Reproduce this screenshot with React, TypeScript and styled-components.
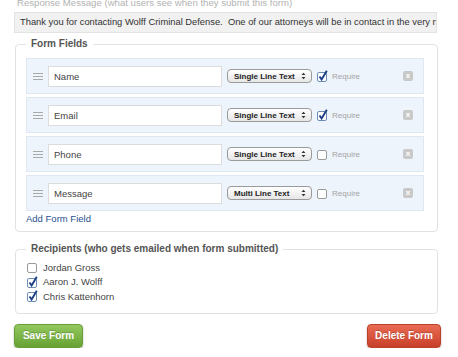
import React, { useState } from "react";
import styled, { createGlobalStyle } from "styled-components";

const GlobalStyle = createGlobalStyle`
    html, body {
        margin: 0;
        padding: 0;
        background: #ffffff;
        overflow: hidden;
    }
    body {
        font-family: "Liberation Sans", Arial, Helvetica, sans-serif;
        color: #333;
    }
`;

const SPage = styled.div`
    display: flex;
    flex-direction: column;
    width: 427px;
    padding-left: 14px;
`;

const SLabel = styled.div`
    font-size: 9.6px;
    line-height: 14px;
    color: #b3b3b3;
    margin-top: -4px;
    padding-left: 3px;
    white-space: nowrap;
`;

const SResponse = styled.div`
    box-sizing: border-box;
    width: 423px;
    height: 21px;
    margin-top: 2px;
    padding: 0 5px;
    background: #f1f1f1;
    border: 1px solid #e3e3e3;
    font-size: 9.35px;
    line-height: 19px;
    color: #333;
    white-space: nowrap;
    overflow: hidden;
`;

const SFieldset = styled.fieldset<{ $top: number; $pt: number; $bottom: number }>`
    box-sizing: border-box;
    width: 423px;
    margin: ${(p) => p.$top}px 0 0 1px;
    padding: ${(p) => p.$pt}px 13px ${(p) => p.$bottom}px 10px;
    border: 1px solid #e2e2e2;
    border-radius: 4px;
    min-width: 0;
`;

const SLegend = styled.legend`
    padding: 0 5px;
    margin-left: 0;
    font-size: 10px;
    font-weight: bold;
    color: #555;
    line-height: 14px;
`;

const SRows = styled.div`
    display: flex;
    flex-direction: column;
    gap: 3px;
`;

const SRow = styled.div`
    box-sizing: border-box;
    display: flex;
    align-items: center;
    height: 36px;
    padding: 0 10px 0 6px;
    background: #eef4fc;
    border: 1px solid #dfe7f1;
`;

const SHandle = styled.div`
    display: flex;
    flex-direction: column;
    gap: 2px;
    width: 10px;
    margin-right: 5px;

    span {
        display: block;
        height: 1px;
        background: #a9a9a9;
    }
`;

const SInput = styled.div`
    box-sizing: border-box;
    width: 174px;
    height: 21px;
    padding: 0 5px;
    background: #fff;
    border: 1px solid #dcdcdc;
    font-size: 9.5px;
    line-height: 19px;
    color: #444;
`;

const SSelect = styled.div`
    box-sizing: border-box;
    display: flex;
    align-items: center;
    justify-content: space-between;
    width: 85px;
    height: 14px;
    margin-left: 5px;
    padding: 0 5px 0 6px;
    border: 1px solid #9a9a9a;
    border-radius: 4px;
    background: linear-gradient(#ffffff, #e6e6e6);
    font-size: 8px;
    font-weight: bold;
    color: #222;
    white-space: nowrap;
`;

const SRequire = styled.label`
    display: flex;
    align-items: center;
    gap: 4px;
    margin-left: 5px;
    font-size: 8px;
    color: #a3a3a3;
`;

const SRemove = styled.div`
    display: flex;
    align-items: center;
    justify-content: center;
    width: 10px;
    height: 10px;
    margin-left: auto;
    border-radius: 2px;
    background: #c9c9c9;
    color: #fff;
    font-size: 8px;
    line-height: 10px;
    font-weight: bold;
`;

const SAddLink = styled.a`
    display: block;
    margin-top: 1px;
    font-size: 9.5px;
    line-height: 14px;
    color: #1f4f8e;
    text-decoration: none;
`;

const SRecipient = styled.label`
    display: flex;
    align-items: center;
    gap: 5px;
    height: 14.5px;
    padding-left: 1px;
    font-size: 9.5px;
    color: #444;
`;

const SButtons = styled.div`
    display: flex;
    justify-content: space-between;
    margin-top: 10px;
`;

const SButton = styled.button<{ $tone: "green" | "red"; $width: number }>`
    width: ${(p) => p.$width}px;
    height: 24px;
    border: 1px solid ${(p) => (p.$tone === "green" ? "#6a9e3b" : "#b8412b")};
    border-radius: 4px;
    background: ${(p) =>
        p.$tone === "green" ? "linear-gradient(#93c95f, #66a132)" : "linear-gradient(#ea6b53, #c73f29)"};
    box-shadow: 0 1px 2px rgba(0, 0, 0, 0.3);
    color: #fff;
    font-family: "Liberation Sans", Arial, sans-serif;
    font-size: 10px;
    font-weight: bold;
    text-shadow: 0 -1px 0 rgba(0, 0, 0, 0.2);
    padding: 0;
`;

const CheckBox = ({ checked, onClick }: { checked: boolean; onClick?: () => void }) => (
    <svg width="11" height="12" viewBox="0 0 11 12" onClick={onClick} style={{ flexShrink: 0 }}>
        <rect x="0.5" y="2.5" width="9" height="9" rx="1.5" fill="#fff" stroke={checked ? "#6d8cb6" : "#9a9a9a"} />
        {checked && <path d="M2.5 6.5 L4.6 9.5 L9.8 0.8" fill="none" stroke="#1c3f86" strokeWidth="1.9" />}
    </svg>
);

const SelectArrows = () => (
    <svg width="5" height="8" viewBox="0 0 5 8">
        <path d="M0.5 3 L2.5 0.8 L4.5 3 Z M0.5 5 L2.5 7.2 L4.5 5 Z" fill="#333" />
    </svg>
);

const App = () => {
    const [fields, setFields] = useState([
        { name: "Name", type: "Single Line Text", required: true },
        { name: "Email", type: "Single Line Text", required: true },
        { name: "Phone", type: "Single Line Text", required: false },
        { name: "Message", type: "Multi Line Text", required: false },
    ]);
    const [recipients, setRecipients] = useState([
        { name: "Jordan Gross", checked: false },
        { name: "Aaron J. Wolff", checked: true },
        { name: "Chris Kattenhorn", checked: true },
    ]);

    const toggleRequire = (i: number) => () => {
        setFields(fields.map((f, idx) => (idx === i ? { ...f, required: !f.required } : f)));
    };

    const toggleRecipient = (i: number) => () => {
        setRecipients(recipients.map((r, idx) => (idx === i ? { ...r, checked: !r.checked } : r)));
    };

    return (
        <SPage>
            <GlobalStyle />
            <SLabel>Response Message (what users see when they submit this form)</SLabel>
            <SResponse>
                Thank you for contacting Wolff Criminal Defense.&nbsp; One of our attorneys will be in contact in the very
                near future.
            </SResponse>

            <SFieldset $top={4} $pt={7} $bottom={5}>
                <SLegend>Form Fields</SLegend>
                <SRows>
                    {fields.map((f, i) => (
                        <SRow key={f.name}>
                            <SHandle>
                                <span />
                                <span />
                                <span />
                            </SHandle>
                            <SInput>{f.name}</SInput>
                            <SSelect>
                                <span>{f.type}</span>
                                <SelectArrows />
                            </SSelect>
                            <SRequire>
                                <CheckBox checked={f.required} onClick={toggleRequire(i)} />
                                Require
                            </SRequire>
                            <SRemove>x</SRemove>
                        </SRow>
                    ))}
                </SRows>
                <SAddLink href="#">Add Form Field</SAddLink>
            </SFieldset>

            <SFieldset $top={10} $pt={4} $bottom={9}>
                <SLegend>Recipients (who gets emailed when form submitted)</SLegend>
                {recipients.map((r, i) => (
                    <SRecipient key={r.name}>
                        <CheckBox checked={r.checked} onClick={toggleRecipient(i)} />
                        {r.name}
                    </SRecipient>
                ))}
            </SFieldset>

            <SButtons>
                <SButton $tone="green" $width={69}>
                    Save Form
                </SButton>
                <SButton $tone="red" $width={74}>
                    Delete Form
                </SButton>
            </SButtons>
        </SPage>
    );
};

export default App;
